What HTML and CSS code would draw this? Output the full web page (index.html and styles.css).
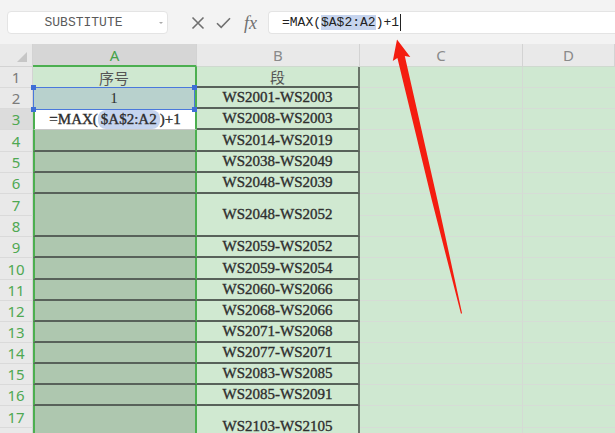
FILE: index.html
```html
<!DOCTYPE html>
<html lang="zh">
<head>
<meta charset="utf-8">
<title>Sheet</title>
<link rel="stylesheet" href="styles.css">
</head>
<body>
<div class="toolbar">
  <div class="namebox"><span class="namebox-text">SUBSTITUTE</span><span class="caret"></span></div>
  <div class="tools">
    <svg class="ic-x" width="14" height="14" viewBox="0 0 14 14"><path d="M1.5 1.5 L12.5 12.5 M12.5 1.5 L1.5 12.5" stroke="#707070" stroke-width="1.6" fill="none"/></svg>
    <svg class="ic-ok" width="15" height="12" viewBox="0 0 15 12"><path d="M1 6.2 L5.2 10.4 L14 1.2" stroke="#707070" stroke-width="1.6" fill="none"/></svg>
    <span class="fx">fx</span>
  </div>
  <div class="formula">=MAX(<span class="fref">$A$2:A2</span>)+1<span class="cursor"></span></div>
</div>

<div class="sheet">
  <div class="corner"><svg width="33" height="22" viewBox="0 0 33 22"><polygon points="17,18 27,18 27,8" fill="#c6c6c6"/></svg></div>
  <div class="ch sel">A</div>
  <div class="ch">B</div>
  <div class="ch">C</div>
  <div class="ch">D</div>

  <div class="rh">1</div>
  <div class="cell a1 cjk">序号</div>
  <div class="cell b cjk">段</div>
  <div class="c"></div><div class="d"></div>

  <div class="rh">2</div>
  <div class="cell a2">1<span class="selbox"></span><span class="hd tl"></span><span class="hd tr"></span><span class="hd bl"></span><span class="hd br"></span></div>
  <div class="cell b">WS2001-WS2003</div>
  <div class="c"></div><div class="d"></div>

  <div class="rh g cur">3</div>
  <div class="cell a3">=MAX(<span class="ref">$A$2:A2</span>)+1</div>
  <div class="cell b">WS2008-WS2003</div>
  <div class="c"></div><div class="d"></div>

  <div class="rh g">4</div>
  <div class="cell a"></div>
  <div class="cell b">WS2014-WS2019</div>
  <div class="c"></div><div class="d"></div>

  <div class="rh g">5</div>
  <div class="cell a"></div>
  <div class="cell b">WS2038-WS2049</div>
  <div class="c"></div><div class="d"></div>

  <div class="rh g">6</div>
  <div class="cell a"></div>
  <div class="cell b">WS2048-WS2039</div>
  <div class="c"></div><div class="d"></div>

  <div class="rh g">7</div>
  <div class="cell a span2"></div>
  <div class="cell b span2">WS2048-WS2052</div>
  <div class="c"></div><div class="d"></div>

  <div class="rh g">8</div>
  <div class="c"></div><div class="d"></div>

  <div class="rh g">9</div>
  <div class="cell a"></div>
  <div class="cell b">WS2059-WS2052</div>
  <div class="c"></div><div class="d"></div>

  <div class="rh g">10</div>
  <div class="cell a"></div>
  <div class="cell b">WS2059-WS2054</div>
  <div class="c"></div><div class="d"></div>

  <div class="rh g">11</div>
  <div class="cell a"></div>
  <div class="cell b">WS2060-WS2066</div>
  <div class="c"></div><div class="d"></div>

  <div class="rh g">12</div>
  <div class="cell a"></div>
  <div class="cell b">WS2068-WS2066</div>
  <div class="c"></div><div class="d"></div>

  <div class="rh g">13</div>
  <div class="cell a"></div>
  <div class="cell b">WS2071-WS2068</div>
  <div class="c"></div><div class="d"></div>

  <div class="rh g">14</div>
  <div class="cell a"></div>
  <div class="cell b">WS2077-WS2071</div>
  <div class="c"></div><div class="d"></div>

  <div class="rh g">15</div>
  <div class="cell a"></div>
  <div class="cell b">WS2083-WS2085</div>
  <div class="c"></div><div class="d"></div>

  <div class="rh g">16</div>
  <div class="cell a"></div>
  <div class="cell b">WS2085-WS2091</div>
  <div class="c"></div><div class="d"></div>

  <div class="rh g">17</div>
  <div class="cell a span2"></div>
  <div class="cell b span2">WS2103-WS2105</div>
  <div class="c"></div><div class="d"></div>

  <div class="rh g">18</div>
  <div class="c"></div><div class="d"></div>
</div>

<svg class="arrow" width="615" height="433" viewBox="0 0 615 433">
  <polygon points="397,39.5 410.3,56.9 404.8,56.1 437.3,199.4 462.1,313.4 460.9,313.6 431.9,200.6 397.4,57.9 392.8,61" fill="#f41d10"/>
</svg>
</body>
</html>
```

FILE: styles.css
```css
html, body {
  margin: 0;
  padding: 0;
  width: 615px;
  height: 433px;
  overflow: hidden;
  background: #f3f3f3;
}

.toolbar {
  height: 44px;
  box-sizing: border-box;
  padding: 11px 0 0 7px;
  display: flex;
  align-items: flex-start;
  background: #f3f3f3;
}

.namebox {
  width: 161px;
  height: 23px;
  box-sizing: border-box;
  background: #fff;
  border: 1px solid #e4e4e4;
  border-radius: 4px;
  display: flex;
  align-items: center;
}

.namebox-text {
  flex: 1;
  text-align: center;
  font: 13px "Liberation Mono", monospace;
  color: #5a5a5a;
}

.caret {
  width: 0;
  height: 0;
  border-left: 2px solid transparent;
  border-right: 2px solid transparent;
  border-top: 2px solid #aaa;
  margin-right: 4px;
}

.tools {
  width: 100px;
  height: 23px;
  display: flex;
  align-items: center;
  padding-left: 23px;
  box-sizing: border-box;
}

.ic-x { margin-right: 11px; }
.ic-ok { margin-right: 13px; margin-top: 1px; }

.fx {
  font: italic 18px "Liberation Serif", serif;
  color: #707070;
  line-height: 20px;
}

.formula {
  flex: 1;
  height: 23px;
  box-sizing: border-box;
  background: #fff;
  border: 1px solid #e4e4e4;
  border-right: none;
  border-radius: 4px 0 0 4px;
  padding-left: 13px;
  font: 13px "Liberation Mono", monospace;
  line-height: 21px;
  color: #222;
  white-space: nowrap;
}

.fref {
  background: #c6d4ee;
}

.cursor {
  display: inline-block;
  width: 1px;
  height: 17px;
  background: #222;
  vertical-align: middle;
  margin-left: 1px;
}

.sheet {
  display: grid;
  grid-template-columns: 33px 164px 163px 163px 92px;
  grid-template-rows: 23px 21px 21px 21px 22px 21px 21px 22px 21px 21px 22px 21px 21px 21px 21px 21px 21px 22px 21px;
  height: 389px;
  overflow: hidden;
}

.corner {
  background: #e9e9e9;
  border-right: 1px solid #d3d3d3;
  border-bottom: 1px solid #d3d3d3;
  box-sizing: border-box;
}

.corner svg { display: block; }

.ch {
  background: #e9e9e9;
  border-right: 1px solid #d3d3d3;
  border-bottom: 1px solid #cfd9cf;
  box-sizing: border-box;
  display: flex;
  align-items: center;
  justify-content: center;
  font: 15px "Noto Sans", sans-serif;
  color: #8a8a8a;
}

.ch.sel {
  background: #d6d6d6;
  color: #45a24a;
  border-bottom: 2px solid #4caf50;
}

.rh {
  background: #e9e9e9;
  border-right: 1px solid #d3d3d3;
  border-bottom: 1px solid #dadada;
  box-sizing: border-box;
  display: flex;
  align-items: center;
  justify-content: center;
  font: 15px "Noto Sans", sans-serif;
  color: #7b7b7b;
}

.rh.g { color: #4fa852; }
.rh.cur { background: #dcdcdc; }

.cell {
  box-sizing: border-box;
  display: flex;
  align-items: center;
  justify-content: center;
  font: 15px "Liberation Serif", serif;
  -webkit-text-stroke: 0.35px #2e2e2e;
  color: #2e2e2e;
  white-space: nowrap;
}

.cjk {
  font: 15px "Noto Sans CJK SC", sans-serif;
  -webkit-text-stroke: 0;
  color: #555;
}

.span2 { grid-row: span 2; }

.a1 {
  background: #cfe8d0;
  border-right: 2px solid #4caf50;
}

.a2 {
  background: #b8d1cd;
  border-right: 2px solid #4caf50;
  position: relative;
  -webkit-text-stroke: 0;
}

.selbox {
  position: absolute;
  left: 0;
  right: 0;
  top: -1px;
  bottom: -1px;
  border: 1px solid #4a78dc;
}

.hd {
  position: absolute;
  width: 5px;
  height: 5px;
  background: #3f6fd6;
}

.hd.tl { left: -2px; top: -3px; }
.hd.tr { right: -2px; top: -3px; }
.hd.bl { left: -2px; bottom: -3px; }
.hd.br { right: -2px; bottom: -3px; }

.a3 {
  background: #fff;
  border-left: 2px solid #4caf50;
  border-right: 2px solid #4caf50;
  border-bottom: 1px solid #c8c8c8;
}

.ref {
  background: #c5d4ee;
  border-radius: 8px;
  padding: 1px 3px;
}

.a {
  background: #aec7af;
  border-left: 2px solid #4caf50;
  border-right: 2px solid #4caf50;
  border-bottom: 2px solid #58625a;
}

.b {
  background: #d0e9d1;
  border-right: 2px solid #6a756a;
  border-bottom: 2px solid #58625a;
}

.c {
  background: #cfe8d1;
  border-right: 1px solid #d4dad4;
  border-bottom: 1px solid #d6dcd6;
  box-sizing: border-box;
}

.d {
  background: #cfe8d1;
  border-bottom: 1px solid #d6dcd6;
  box-sizing: border-box;
}

.arrow {
  position: absolute;
  left: 0;
  top: 0;
  pointer-events: none;
}
```
